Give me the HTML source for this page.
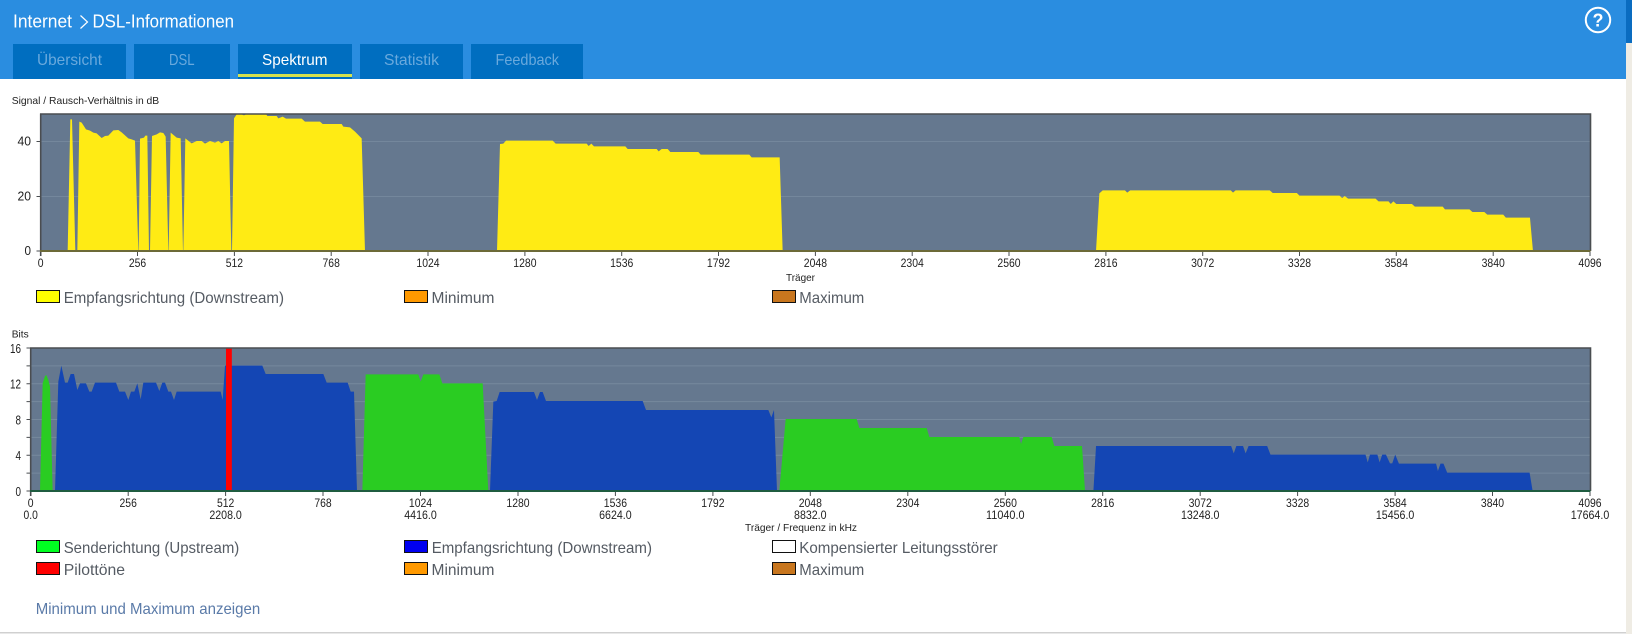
<!DOCTYPE html>
<html lang="de">
<head>
<meta charset="utf-8">
<title>DSL-Informationen</title>
<style>
html,body{margin:0;padding:0;background:#fff;overflow:hidden}
svg{display:block;font-family:"Liberation Sans",sans-serif;filter:blur(.3px)}
.tab{font-size:16px;fill:#69a9dd}
.s{font-size:10.5px;fill:#222}
.t{font-size:12px;fill:#222;text-anchor:middle}
.y{font-size:13px;fill:#222;text-anchor:end}
.l{font-size:16px;fill:#555b63}
</style>
</head>
<body>
<svg xmlns="http://www.w3.org/2000/svg" width="1632" height="634" viewBox="0 0 1632 634">
<rect width="1632" height="634" fill="#fff"/>
<rect x="1626" y="0" width="6" height="634" fill="#efece4"/>
<rect x="1626" y="0" width="6" height="43" fill="#0a6cc0"/>
<rect x="0" y="632" width="1626" height="1.5" fill="#d0d0d0"/>
<!-- header -->
<rect width="1626" height="79" fill="#2a8de0"/>
<text x="13" y="27.5" font-size="18" fill="#fff" textLength="59" lengthAdjust="spacingAndGlyphs">Internet</text>
<path d="M80.5 15.5 L87.5 22 L80.5 28.5" fill="none" stroke="#fff" stroke-width="1.2"/>
<text x="92.5" y="27.5" font-size="18" fill="#fff" textLength="141.5" lengthAdjust="spacingAndGlyphs">DSL-Informationen</text>
<circle cx="1598" cy="20" r="12.2" fill="none" stroke="#fff" stroke-width="2"/>
<text x="1598" y="26.3" font-size="18" font-weight="bold" fill="#fff" text-anchor="middle">?</text>
<!-- tabs -->
<rect x="13" y="44" width="113" height="35" fill="#006ec0"/>
<rect x="134" y="44" width="96" height="35" fill="#006ec0"/>
<rect x="238" y="44" width="114" height="35" fill="#006ec0"/>
<rect x="360" y="44" width="103" height="35" fill="#006ec0"/>
<rect x="471" y="44" width="112" height="35" fill="#006ec0"/>
<rect x="238" y="74" width="114" height="3" fill="#d6e24e"/>
<text class="tab" x="37" y="65" textLength="65" lengthAdjust="spacingAndGlyphs">Übersicht</text>
<text class="tab" x="169" y="65" textLength="25.5" lengthAdjust="spacingAndGlyphs">DSL</text>
<text class="tab" x="262" y="65" style="fill:#fff" textLength="65.5" lengthAdjust="spacingAndGlyphs">Spektrum</text>
<text class="tab" x="384" y="65" textLength="55" lengthAdjust="spacingAndGlyphs">Statistik</text>
<text class="tab" x="495.5" y="65" textLength="63.5" lengthAdjust="spacingAndGlyphs">Feedback</text>

<!-- chart 1 -->
<text class="s" x="11.7" y="104" textLength="147.5" lengthAdjust="spacingAndGlyphs">Signal / Rausch-Verhältnis in dB</text>
<rect x="40.7" y="114" width="1549.3" height="137" fill="#65788f"/>
<g stroke="#74879c" stroke-width="1"><path d="M40.7 141.5H1590M40.7 196.5H1590"/></g>
<g fill="#ffeb14">
<g transform="translate(0,90) scale(.33333)">
<polygon points="203,483 211,88 216,88 226,483"/>
<polygon points="232,483 238,95 245,98 258,118 270,122 280,128 290,130 305,144 315,138 325,137 340,121 355,120 365,127 385,145 395,148 405,152 415,483"/>
<polygon points="416,483 420,146 432,143 436,137 442,137 447,483"/>
<polygon points="450,483 456,138 470,133 480,127 490,129 497,140 505,483"/>
<polygon points="506,483 512,128 530,143 542,145 549,483"/>
<polygon points="550,483 556,145 575,160 590,153 605,153 615,161 630,153 645,158 655,153 665,160 675,153 687,153 694,483"/>
<polygon points="696,483 702,85 710,73 725,73 732,76 740,72 798,72 802,78 830,78 835,85 848,80 858,86 905,86 915,95 960,95 968,102 1025,102 1030,110 1050,112 1065,125 1085,145 1095,483"/>
</g>
<g transform="translate(400,100) scale(.33333)">
<polygon points="291,453 300,132 310,131 318,122 458,122 467,131 560,131 566,138 574,131 582,139 676,139 683,147 770,147 776,154 785,147 803,147 811,156 895,156 902,164 1048,164 1055,172 1139,172 1148,453"/>
</g>
<g transform="translate(1050,160) scale(.37120,.33333)">
<polygon points="124,272 133,100 142,91 202,91 208,98 216,91 487,91 493,98 500,91 592,91 600,99 665,99 672,107 780,107 787,114 794,108 803,116 877,116 885,124 912,124 918,132 925,124 933,132 975,132 983,140 1058,140 1064,148 1130,148 1138,156 1170,156 1178,164 1221,164 1228,173 1293,173 1301,272"/>
</g>
</g>
<g fill="none" stroke="#4a4d50">
<path d="M40 114H1590.5V251" stroke-width="1.6"/>
<path d="M40.7 113.5V256" stroke-width="1.6"/>
<path d="M36.5 141.5H40M36.5 196.5H40M36.5 251H40" stroke-width="1"/>
<path d="M137.5 251v5M234.4 251v5M331.2 251v5M428 251v5M524.9 251v5M621.7 251v5M718.5 251v5M815.4 251v5M912.2 251v5M1009 251v5M1105.9 251v5M1202.7 251v5M1299.5 251v5M1396.3 251v5M1493.2 251v5M1590 251v5" stroke-width="1"/>
</g>
<rect x="40" y="250" width="1550.5" height="2" fill="#6c6a38"/>
<text class="y" x="31" y="145.5" textLength="13.5" lengthAdjust="spacingAndGlyphs">40</text>
<text class="y" x="31" y="200.3" textLength="13.5" lengthAdjust="spacingAndGlyphs">20</text>
<text class="y" x="31" y="255" textLength="6.5" lengthAdjust="spacingAndGlyphs">0</text>
<g>
<text class="t" x="40.7" y="267" textLength="5.8" lengthAdjust="spacingAndGlyphs">0</text>
<text class="t" x="137.5" y="267" textLength="17.3" lengthAdjust="spacingAndGlyphs">256</text>
<text class="t" x="234.4" y="267" textLength="17.3" lengthAdjust="spacingAndGlyphs">512</text>
<text class="t" x="331.2" y="267" textLength="17.3" lengthAdjust="spacingAndGlyphs">768</text>
<text class="t" x="428" y="267" textLength="23.2" lengthAdjust="spacingAndGlyphs">1024</text>
<text class="t" x="524.9" y="267" textLength="23.2" lengthAdjust="spacingAndGlyphs">1280</text>
<text class="t" x="621.7" y="267" textLength="23.2" lengthAdjust="spacingAndGlyphs">1536</text>
<text class="t" x="718.5" y="267" textLength="23.2" lengthAdjust="spacingAndGlyphs">1792</text>
<text class="t" x="815.4" y="267" textLength="23.2" lengthAdjust="spacingAndGlyphs">2048</text>
<text class="t" x="912.2" y="267" textLength="23.2" lengthAdjust="spacingAndGlyphs">2304</text>
<text class="t" x="1009" y="267" textLength="23.2" lengthAdjust="spacingAndGlyphs">2560</text>
<text class="t" x="1105.9" y="267" textLength="23.2" lengthAdjust="spacingAndGlyphs">2816</text>
<text class="t" x="1202.7" y="267" textLength="23.2" lengthAdjust="spacingAndGlyphs">3072</text>
<text class="t" x="1299.5" y="267" textLength="23.2" lengthAdjust="spacingAndGlyphs">3328</text>
<text class="t" x="1396.3" y="267" textLength="23.2" lengthAdjust="spacingAndGlyphs">3584</text>
<text class="t" x="1493.2" y="267" textLength="23.2" lengthAdjust="spacingAndGlyphs">3840</text>
<text class="t" x="1590" y="267" textLength="23.2" lengthAdjust="spacingAndGlyphs">4096</text>
</g>
<text class="s" x="786" y="281" textLength="29" lengthAdjust="spacingAndGlyphs">Träger</text>
<!-- legend 1 -->
<g stroke="#111" stroke-width="1">
<rect x="36.5" y="290.5" width="23" height="12" fill="#ffff00"/>
<rect x="404.5" y="290.5" width="23" height="12" fill="#ff9900"/>
<rect x="772.5" y="290.5" width="23" height="12" fill="#c8761e"/>
</g>
<text class="l" x="63.7" y="303" textLength="220.3" lengthAdjust="spacingAndGlyphs">Empfangsrichtung (Downstream)</text>
<text class="l" x="431.5" y="303" textLength="63" lengthAdjust="spacingAndGlyphs">Minimum</text>
<text class="l" x="799.3" y="303" textLength="65" lengthAdjust="spacingAndGlyphs">Maximum</text>

<!-- chart 2 -->
<text class="s" x="11.7" y="337.5" textLength="17" lengthAdjust="spacingAndGlyphs">Bits</text>
<rect x="30.7" y="348" width="1559.3" height="143" fill="#65788f"/>
<g stroke="#76899d" stroke-width="1"><path d="M30.7 473.1H1590M30.7 455.2H1590M30.7 437.4H1590M30.7 419.5H1590M30.7 401.6H1590M30.7 383.7H1590M30.7 365.9H1590"/></g>
<g transform="translate(0,320) scale(.33333)">
<polygon fill="#2acc22" points="120,514 128,190 135,168 139,165 145,180 150,200 158,514"/>
<polygon fill="#1446b4" points="165,514 175,185 184,137 195,188 203,188 212,162 222,162 232,210 240,190 258,190 268,215 275,215 285,188 348,188 358,215 375,215 385,240 393,215 403,215 412,190 422,238 430,188 468,188 478,213 487,188 495,188 505,215 513,215 522,240 530,215 662,215 668,240 675,137 787,137 797,162 970,162 980,188 1043,188 1052,215 1062,215 1071,514"/>
<rect x="678" y="84" width="17.5" height="430" fill="#ff0000"/>
</g>
<g transform="translate(350,340) scale(.33333)">
<polygon fill="#2acc22" points="37,453 47,103 205,103 212,125 220,103 268,103 277,130 398,130 415,453"/>
<polygon fill="#1446b4" points="420,453 430,185 440,183 449,156 552,156 561,180 570,156 578,156 588,183 878,183 888,210 1255,210 1264,232 1272,210 1281,453"/>
</g>
<g transform="translate(770,400) scale(.33333)">
<polygon fill="#2acc22" points="28,272 47,57 260,57 268,84 470,84 478,111 748,111 753,132 760,111 845,111 853,138 936,138 945,272"/>
</g>
<g transform="translate(1050,400) scale(.37120,.33333)">
<polygon fill="#1446b4" points="117,272 124,138 488,138 495,160 502,138 520,138 527,160 535,138 585,138 594,164 850,164 856,187 862,164 882,164 888,187 895,164 905,164 916,190 922,190 930,164 940,191 1040,191 1045,213 1052,191 1060,191 1070,218 1292,218 1300,272"/>
</g>
<g fill="none" stroke="#4a4d50">
<path d="M30 348H1590.5V491" stroke-width="1.6"/>
<path d="M30.7 347.5V496" stroke-width="1.6"/>
<path d="M26.5 348H30M26.5 365.9H30M26.5 383.7H30M26.5 401.6H30M26.5 419.5H30M26.5 437.4H30M26.5 455.2H30M26.5 473.1H30M26.5 491H30" stroke-width="1"/>
<path d="M128.2 491v5M225.6 491v5M323 491v5M420.5 491v5M518 491v5M615.4 491v5M712.9 491v5M810.3 491v5M907.8 491v5M1005.3 491v5M1102.7 491v5M1200.2 491v5M1297.6 491v5M1395.1 491v5M1492.5 491v5M1590 491v5" stroke-width="1"/>
</g>
<rect x="30" y="490" width="1560.5" height="2" fill="#1f5c40"/>
<text class="y" x="21" y="353" textLength="11" lengthAdjust="spacingAndGlyphs">16</text>
<text class="y" x="21" y="388.5" textLength="11" lengthAdjust="spacingAndGlyphs">12</text>
<text class="y" x="21" y="424.5" textLength="5.5" lengthAdjust="spacingAndGlyphs">8</text>
<text class="y" x="21" y="460" textLength="5.5" lengthAdjust="spacingAndGlyphs">4</text>
<text class="y" x="21" y="496" textLength="5.5" lengthAdjust="spacingAndGlyphs">0</text>
<g>
<text class="t" x="30.7" y="507" textLength="5.8" lengthAdjust="spacingAndGlyphs">0</text>
<text class="t" x="128.2" y="507" textLength="17.3" lengthAdjust="spacingAndGlyphs">256</text>
<text class="t" x="225.6" y="507" textLength="17.3" lengthAdjust="spacingAndGlyphs">512</text>
<text class="t" x="323" y="507" textLength="17.3" lengthAdjust="spacingAndGlyphs">768</text>
<text class="t" x="420.5" y="507" textLength="23.2" lengthAdjust="spacingAndGlyphs">1024</text>
<text class="t" x="518" y="507" textLength="23.2" lengthAdjust="spacingAndGlyphs">1280</text>
<text class="t" x="615.4" y="507" textLength="23.2" lengthAdjust="spacingAndGlyphs">1536</text>
<text class="t" x="712.9" y="507" textLength="23.2" lengthAdjust="spacingAndGlyphs">1792</text>
<text class="t" x="810.3" y="507" textLength="23.2" lengthAdjust="spacingAndGlyphs">2048</text>
<text class="t" x="907.8" y="507" textLength="23.2" lengthAdjust="spacingAndGlyphs">2304</text>
<text class="t" x="1005.3" y="507" textLength="23.2" lengthAdjust="spacingAndGlyphs">2560</text>
<text class="t" x="1102.7" y="507" textLength="23.2" lengthAdjust="spacingAndGlyphs">2816</text>
<text class="t" x="1200.2" y="507" textLength="23.2" lengthAdjust="spacingAndGlyphs">3072</text>
<text class="t" x="1297.6" y="507" textLength="23.2" lengthAdjust="spacingAndGlyphs">3328</text>
<text class="t" x="1395.1" y="507" textLength="23.2" lengthAdjust="spacingAndGlyphs">3584</text>
<text class="t" x="1492.5" y="507" textLength="23.2" lengthAdjust="spacingAndGlyphs">3840</text>
<text class="t" x="1590" y="507" textLength="23.2" lengthAdjust="spacingAndGlyphs">4096</text>
<text class="t" x="30.7" y="519" textLength="14.3" lengthAdjust="spacingAndGlyphs">0.0</text>
<text class="t" x="225.6" y="519" textLength="32.5" lengthAdjust="spacingAndGlyphs">2208.0</text>
<text class="t" x="420.5" y="519" textLength="32.5" lengthAdjust="spacingAndGlyphs">4416.0</text>
<text class="t" x="615.4" y="519" textLength="32.5" lengthAdjust="spacingAndGlyphs">6624.0</text>
<text class="t" x="810.3" y="519" textLength="32.5" lengthAdjust="spacingAndGlyphs">8832.0</text>
<text class="t" x="1005.3" y="519" textLength="38.5" lengthAdjust="spacingAndGlyphs">11040.0</text>
<text class="t" x="1200.2" y="519" textLength="38.5" lengthAdjust="spacingAndGlyphs">13248.0</text>
<text class="t" x="1395.1" y="519" textLength="38.5" lengthAdjust="spacingAndGlyphs">15456.0</text>
<text class="t" x="1590" y="519" textLength="38.5" lengthAdjust="spacingAndGlyphs">17664.0</text>
</g>
<text class="s" x="745" y="531" textLength="112" lengthAdjust="spacingAndGlyphs">Träger / Frequenz in kHz</text>
<!-- legend 2 -->
<g stroke="#111" stroke-width="1">
<rect x="36.5" y="540.5" width="23" height="12" fill="#00ff21"/>
<rect x="404.5" y="540.5" width="23" height="12" fill="#0000f0"/>
<rect x="772.5" y="540.5" width="23" height="12" fill="#ffffff"/>
<rect x="36.5" y="562.5" width="23" height="12" fill="#ff0000"/>
<rect x="404.5" y="562.5" width="23" height="12" fill="#ff9900"/>
<rect x="772.5" y="562.5" width="23" height="12" fill="#c8761e"/>
</g>
<text class="l" x="63.7" y="553" textLength="175.6" lengthAdjust="spacingAndGlyphs">Senderichtung (Upstream)</text>
<text class="l" x="431.7" y="553" textLength="220.3" lengthAdjust="spacingAndGlyphs">Empfangsrichtung (Downstream)</text>
<text class="l" x="799.3" y="553" textLength="198.4" lengthAdjust="spacingAndGlyphs">Kompensierter Leitungsstörer</text>
<text class="l" x="63.7" y="575" textLength="61.3" lengthAdjust="spacingAndGlyphs">Pilottöne</text>
<text class="l" x="431.5" y="575" textLength="63" lengthAdjust="spacingAndGlyphs">Minimum</text>
<text class="l" x="799.3" y="575" textLength="65" lengthAdjust="spacingAndGlyphs">Maximum</text>
<text x="35.7" y="614" font-size="16" fill="#5a7aa8" textLength="224.5" lengthAdjust="spacingAndGlyphs">Minimum und Maximum anzeigen</text>
</svg>
</body>
</html>
